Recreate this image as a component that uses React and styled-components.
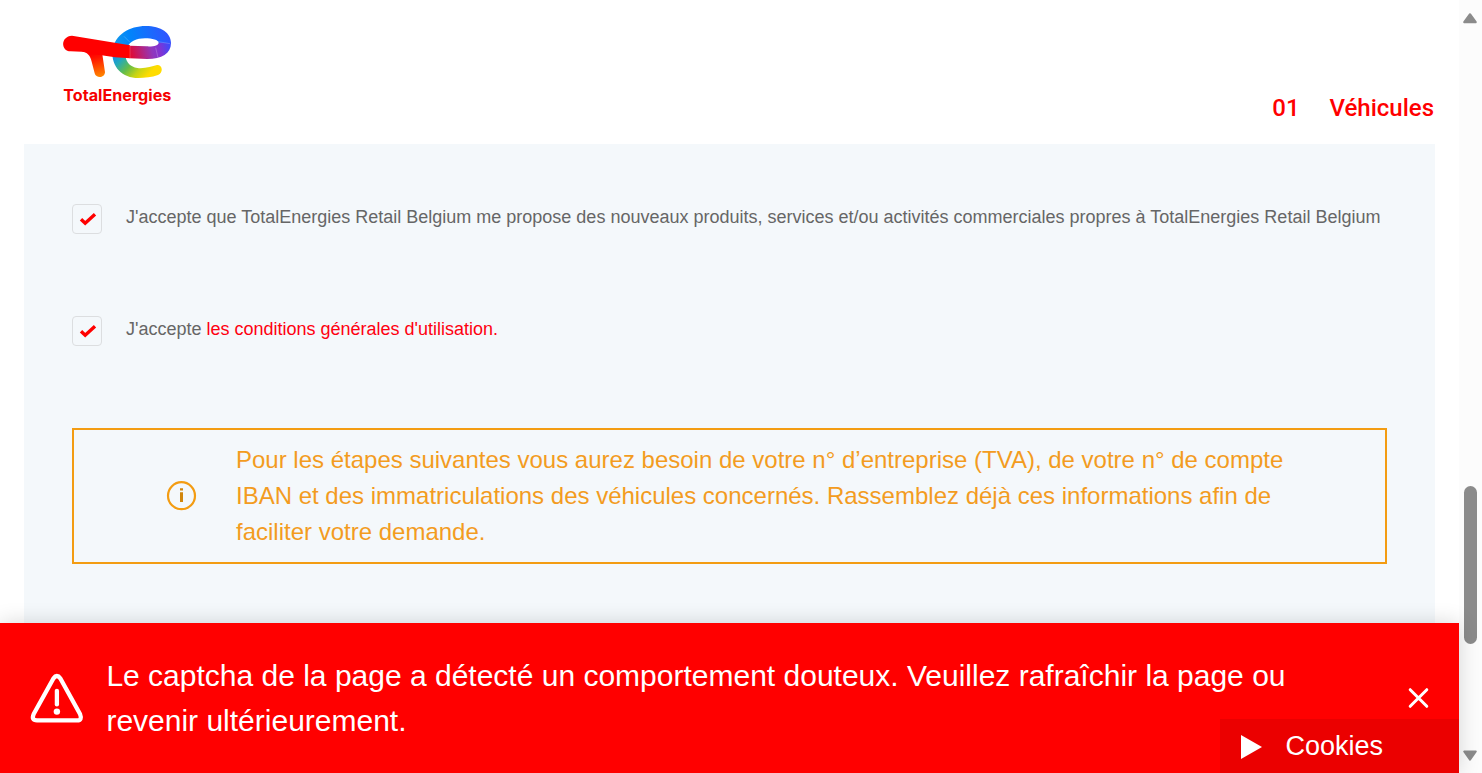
import React from "react";
import styled, { createGlobalStyle } from "styled-components";

const GlobalStyle = createGlobalStyle`
  *, *::before, *::after { box-sizing: border-box; }
  body { margin: 0; background: #fff; overflow: hidden; font-family: "Liberation Sans", Arial, sans-serif; }
  p, h2 { margin: 0; }
`;

const Shell = styled.div`
  display: flex;
  height: 773px;
  overflow: hidden;
`;

const Page = styled.main`
  position: relative;
  display: flex;
  flex-direction: column;
  flex: 1;
  min-width: 0;
`;

const Header = styled.header`
  display: flex;
  justify-content: space-between;
  flex: 0 0 144px;
  padding: 15px 25px 0 50px;
`;

const LogoImage = styled.svg`
  display: block;
  width: 140px;
  height: 100px;
`;

const Step = styled.h2`
  display: flex;
  gap: 30px;
  align-self: flex-start;
  margin-top: 77px;
  color: #f00;
  font: 500 24px/32px Roboto, sans-serif;
`;

const Panel = styled.section`
  flex: 1;
  margin: 0 24px;
  padding: 60px 48px 0;
  background: #f4f8fb;
`;

const ConsentRow = styled.label`
  display: flex;
  gap: 24px;
  height: 30px;
  margin-bottom: 82px;
`;

const CheckBox = styled.span`
  display: flex;
  flex: none;
  width: 30px;
  height: 30px;
  border: 1px solid #dcdee0;
  border-radius: 4px;
`;

const ConsentText = styled.span`
  color: #666;
  font-size: 18px;
  line-height: 26px;
  white-space: nowrap;
`;

const TermsLink = styled.a`
  color: #ff0010;
`;

const Notice = styled.div`
  display: flex;
  align-items: center;
  height: 136px;
  padding-left: 92px;
  border: 2px solid #f39c12;
  color: #f39c1f;
`;

const InfoIcon = styled.svg`
  flex: none;
  width: 32px;
  height: 32px;
  margin-right: 38px;
`;

const NoticeText = styled.p`
  font-size: 24px;
  line-height: 36px;
  white-space: nowrap;
`;

const Alert = styled.div`
  position: absolute;
  left: 0;
  right: 0;
  bottom: 0;
  display: flex;
  align-items: center;
  height: 150px;
  padding: 0 29px;
  background: #f00;
  color: #fff;
  box-shadow: 0 0 20px rgba(0, 0, 0, 0.16);
`;

const WarningIcon = styled.svg`
  flex: none;
  width: 56px;
  height: 52px;
`;

const AlertText = styled.p`
  flex: 1;
  margin-left: 21.4px;
  font-size: 30px;
  line-height: 45px;
  white-space: nowrap;
`;

const CloseButton = styled.button`
  display: flex;
  padding: 0;
  border: 0;
  background: none;
`;

const Cookies = styled.div`
  position: absolute;
  right: 0;
  bottom: 0;
  display: flex;
  align-items: center;
  gap: 23.5px;
  width: 239.5px;
  height: 54px;
  padding: 0 0 0 21.5px;
  background: #eb0000;
  color: #fff;
  font-size: 27px;
`;

const PlayIcon = styled.svg`
  width: 21px;
  height: 26px;
`;

const Scrollbar = styled.aside`
  display: flex;
  flex-direction: column;
  align-items: center;
  flex: 0 0 23px;
  padding: 12px 1px 11px 0;
  background: #fcfcfc;
`;

const ScrollArrowIcon = styled.svg`
  flex: none;
  width: 16px;
  height: 12px;
`;

const Thumb = styled.div`
  width: 13px;
  height: 158px;
  margin: 462px 0 auto;
  border-radius: 7px;
  background: #8b8b8b;
`;

function Logo() {
  return (
    <LogoImage viewBox="0 0 420 300" role="img" aria-label="TotalEnergies">
      <defs>
        <linearGradient id="tail" gradientUnits="userSpaceOnUse" x1="205" y1="105" x2="290" y2="185">
          <stop offset="0" stopColor="#1688ec" />
          <stop offset=".22" stopColor="#22a9bd" />
          <stop offset=".5" stopColor="#65bd48" />
          <stop offset=".75" stopColor="#c5d414" />
          <stop offset="1" stopColor="#ffdc00" />
        </linearGradient>
        <linearGradient id="arch" gradientUnits="userSpaceOnUse" x1="190" y1="90" x2="362" y2="60">
          <stop offset="0" stopColor="#159be8" />
          <stop offset=".3" stopColor="#0085fb" />
          <stop offset="1" stopColor="#3351ff" />
        </linearGradient>
        <linearGradient id="bar" gradientUnits="userSpaceOnUse" x1="240" y1="120" x2="358" y2="88">
          <stop offset="0" stopColor="#e20831" />
          <stop offset=".55" stopColor="#9038bd" />
          <stop offset=".75" stopColor="#8134d3" />
          <stop offset="1" stopColor="#3d4afa" />
        </linearGradient>
        <linearGradient id="stem" gradientUnits="userSpaceOnUse" x1="133" y1="115" x2="150" y2="188">
          <stop offset="0" stopColor="#f00" />
          <stop offset=".2" stopColor="#ff1500" />
          <stop offset="1" stopColor="#ff8c00" />
        </linearGradient>
      </defs>
      <path fill="url(#tail)" d="M187 105C184 158 217 189 265 189C285 189 305 187 324 180C341 173 338 149 321 150C305 154 284 162 262 159C242 155 229 143 227 125Z" />
      <path fill="url(#arch)" d="M187 108C194 58 239 33 287 33C334 33 363 54 363 84L326 84C326 75 307 70 285 70C259 70 241 78 231 98Z" />
      <path fill="url(#bar)" d="M363 84C363 116 335 132 292 132L239 130V92L290 94C312 95 326 91 326 83Z" />
      <path fill="url(#stem)" d="M95 109C113 112 121 123 125 140L134 175C138 191 164 190 165 172L156 112Z" />
      <path fill="#f00" d="M66 62L240 91V130C210 129 180 125 155 121L128 118Q110 110 95 110L62 109C32 108 31 64 66 62Z" />
      <path d="M222 64L240 82M318 79L360 86M317 98L324 128M240 92V130" fill="none" stroke="#fff" strokeOpacity=".3" strokeWidth="2" />
      <text x="40" y="258" fill="#f50000" fontFamily="Inter, sans-serif" fontWeight="700" fontSize="47" textLength="324" lengthAdjust="spacingAndGlyphs">TotalEnergies</text>
    </LogoImage>
  );
}

function Consent({ children }) {
  return (
    <ConsentRow>
      <CheckBox>
        <svg width="28" height="28" viewBox="0 0 28 28" fill="none" stroke="#f00" strokeWidth="3.4">
          <path d="M8 14.2L12.2 18.2L22 9.2" />
        </svg>
      </CheckBox>
      <ConsentText>{children}</ConsentText>
    </ConsentRow>
  );
}

function ScrollArrow({ down }) {
  return (
    <ScrollArrowIcon viewBox="0 0 16 12">
      <path
        d={down ? "M2.2 1.5H13.8L8 9.8Z" : "M8 2.2L13.8 10.2H2.2Z"}
        fill="#8b8b8b" stroke="#8b8b8b" strokeWidth="2" strokeLinejoin="round"
      />
    </ScrollArrowIcon>
  );
}

export default function App() {
  return (
    <>
      <GlobalStyle />
      <Shell>
        <Page>
          <Header>
            <Logo />
            <Step><span>01</span><span>Véhicules</span></Step>
          </Header>
          <Panel>
            <Consent>
              J'accepte que TotalEnergies Retail Belgium me propose des nouveaux produits, services et/ou activités commerciales propres à TotalEnergies Retail Belgium
            </Consent>
            <Consent>
              J'accepte <TermsLink>les conditions générales d'utilisation.</TermsLink>
            </Consent>
            <Notice>
              <InfoIcon viewBox="0 0 32 32" fill="none">
                <circle cx="15.5" cy="15.7" r="13.5" stroke="#f39c12" strokeWidth="2.2" />
                <path d="M15.5 12.2V22M15.5 8.3V10.5" stroke="#d1860c" strokeWidth="3" />
              </InfoIcon>
              <NoticeText>
                Pour les étapes suivantes vous aurez besoin de votre n° d’entreprise (TVA), de votre n° de compte<br />
                IBAN et des immatriculations des véhicules concernés. Rassemblez déjà ces informations afin de<br />
                faciliter votre demande.
              </NoticeText>
            </Notice>
          </Panel>
          <Alert>
            <WarningIcon viewBox="0 0 56 52" fill="none" stroke="#fff" strokeLinecap="round" strokeLinejoin="round">
              <path d="M24.4 6.5Q27.9 1.5 31.4 6.5L51 42Q53.6 48.4 48 48.4H8Q2 48.4 4.7 42Z" strokeWidth="4.3" />
              <path d="M27.9 18.8V32.4" strokeWidth="4.3" />
              <circle cx="27.9" cy="39.6" r="3.2" fill="#fff" stroke="none" />
            </WarningIcon>
            <AlertText>
              Le captcha de la page a détecté un comportement douteux. Veuillez rafraîchir la page ou<br />
              revenir ultérieurement.
            </AlertText>
            <CloseButton aria-label="Fermer">
              <svg width="24" height="24" viewBox="0 0 24 24" stroke="#fff" strokeWidth="3" strokeLinecap="round">
                <path d="M4.2 3.7L20.8 20.3M20.8 3.7L4.2 20.3" />
              </svg>
            </CloseButton>
          </Alert>
          <Cookies>
            <PlayIcon viewBox="0 0 21 26"><path d="M0 2L21 14L0 26Z" fill="#fff" /></PlayIcon>
            <span>Cookies</span>
          </Cookies>
        </Page>
        <Scrollbar>
          <ScrollArrow />
          <Thumb />
          <ScrollArrow down />
        </Scrollbar>
      </Shell>
    </>
  );
}
